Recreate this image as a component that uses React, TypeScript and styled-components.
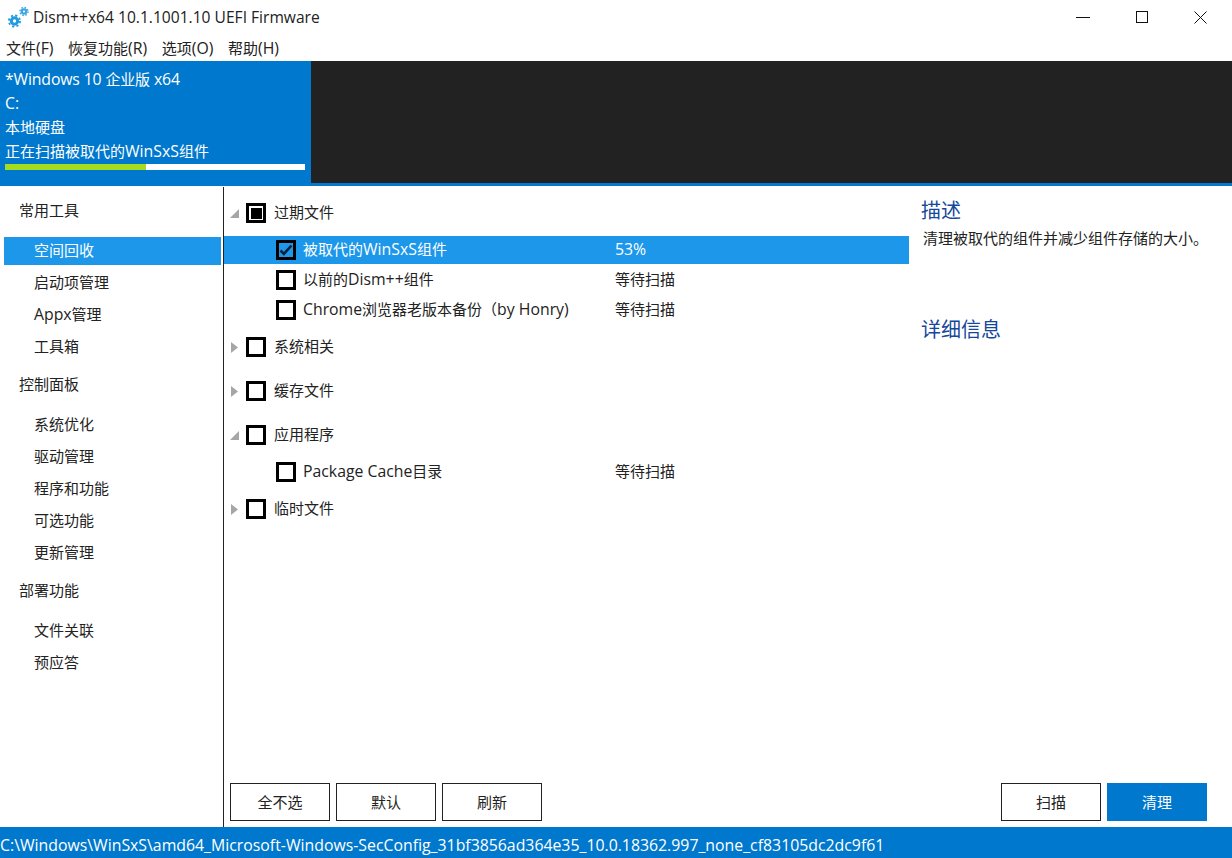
import React from 'react'
import styled, { createGlobalStyle } from 'styled-components'

const GlobalStyle = createGlobalStyle`
    html, body {
        margin: 0;
        padding: 0;
        background: #fff;
    }
    body {
        font-family: "Open Sans", "Noto Sans CJK SC", sans-serif;
        font-size: 15.8px;
        color: #1a1a1a;
    }
`

const navGroups = [
    { title: '常用工具', items: ['空间回收', '启动项管理', 'Appx管理', '工具箱'] },
    { title: '控制面板', items: ['系统优化', '驱动管理', '程序和功能', '可选功能', '更新管理'] },
    { title: '部署功能', items: ['文件关联', '预应答'] },
]

// Latin runs are a bit larger than the Chinese ones in the original UI font
function Text({ children }: { children: string }) {
    const runs = children.split(/([\u3000-\u9fff\uff00-\uffef]+)/)
    return (
        <>
            {runs.map((run, i) => (i % 2 === 1 ? <Han key={i}>{run}</Han> : run))}
        </>
    )
}

function GearIcon() {
    return (
        <svg width="21" height="22" viewBox="0 0 21 22">
            <circle cx="6.5" cy="15" r="3.2" fill="none" stroke="#1f9be0" strokeWidth="3" />
            <circle cx="6.5" cy="15" r="5.6" fill="none" stroke="#1f9be0" strokeWidth="1.8" strokeDasharray="2.2 2.2" />
            <circle cx="16" cy="5.5" r="2.2" fill="none" stroke="#3aa6e2" strokeWidth="2.2" />
            <circle cx="16" cy="5.5" r="4" fill="none" stroke="#3aa6e2" strokeWidth="1.4" strokeDasharray="1.6 1.54" />
        </svg>
    )
}

function Arrow({ open }: { open: boolean }) {
    return (
        <ArrowBox>
            <svg width="10" height="11" viewBox="0 0 10 11">
                {open ? <path d="M9 1v9H0z" fill="#a6a6a6" /> : <path d="M1 0l7 5.5L1 11z" fill="#a6a6a6" />}
            </svg>
        </ArrowBox>
    )
}

function TreeGroup({ label, open, mark }: { label: string; open: boolean; mark?: boolean }) {
    return (
        <GroupRow>
            <Arrow open={open} />
            <CheckBox>{mark && <CheckFill />}</CheckBox>
            <GroupLabel><Text>{label}</Text></GroupLabel>
        </GroupRow>
    )
}

function TreeItem({ label, status, selected, checked }: { label: string; status: string; selected?: boolean; checked?: boolean }) {
    return (
        <ItemRow $selected={selected}>
            <CheckBox>
                {checked && (
                    <svg width="14" height="14" viewBox="0 0 14 14">
                        <path d="M1.5 7.5l3.4 3.4L12.5 2.5" fill="none" stroke="#0b1f3a" strokeWidth="2.6" />
                    </svg>
                )}
            </CheckBox>
            <ItemLabel><Text>{label}</Text></ItemLabel>
            <ItemStatus><Text>{status}</Text></ItemStatus>
        </ItemRow>
    )
}

export default function App(): React.JSX.Element {
    return (
        <Window>
            <GlobalStyle />
            <TitleBar>
                <GearIcon />
                <TitleText>Dism++x64 10.1.1001.10 UEFI Firmware</TitleText>
                <WindowButtons>
                    <WindowButton>
                        <svg width="14" height="14" viewBox="0 0 14 14"><path d="M0 7.5h14" stroke="#111" /></svg>
                    </WindowButton>
                    <WindowButton>
                        <svg width="12" height="12" viewBox="0 0 12 12"><rect x=".5" y=".5" width="11" height="11" fill="none" stroke="#111" /></svg>
                    </WindowButton>
                    <WindowButton>
                        <svg width="13" height="13" viewBox="0 0 13 13"><path d="M.5.5l12 12M12.5.5l-12 12" stroke="#111" /></svg>
                    </WindowButton>
                </WindowButtons>
            </TitleBar>
            <MenuBar>
                <MenuItem><Text>文件(F)</Text></MenuItem>
                <MenuItem><Text>恢复功能(R)</Text></MenuItem>
                <MenuItem><Text>选项(O)</Text></MenuItem>
                <MenuItem><Text>帮助(H)</Text></MenuItem>
            </MenuBar>
            <Banner>
                <SessionCard>
                    <SessionName><Text>*Windows 10 企业版 x64</Text></SessionName>
                    <SessionLine>C:</SessionLine>
                    <SessionLine><Text>本地硬盘</Text></SessionLine>
                    <SessionLine><Text>正在扫描被取代的WinSxS组件</Text></SessionLine>
                    <Progress>
                        <ProgressFill style={{ width: '47%' }} />
                    </Progress>
                </SessionCard>
            </Banner>
            <Body>
                <Sidebar>
                    {navGroups.map((group) => (
                        <NavGroup key={group.title}>
                            <NavTitle><Text>{group.title}</Text></NavTitle>
                            {group.items.map((item) => (
                                <NavItem key={item} $active={item === '空间回收'}><Text>{item}</Text></NavItem>
                            ))}
                        </NavGroup>
                    ))}
                </Sidebar>
                <Main>
                    <Panes>
                        <Tree>
                            <TreeGroup label="过期文件" open mark />
                            <TreeItem label="被取代的WinSxS组件" status="53%" selected checked />
                            <TreeItem label="以前的Dism++组件" status="等待扫描" />
                            <TreeItem label="Chrome浏览器老版本备份（by Honry)" status="等待扫描" />
                            <TreeGroup label="系统相关" open={false} />
                            <TreeGroup label="缓存文件" open={false} />
                            <TreeGroup label="应用程序" open />
                            <TreeItem label="Package Cache目录" status="等待扫描" />
                            <TreeGroup label="临时文件" open={false} />
                        </Tree>
                        <Details>
                            <DetailHeading>描述</DetailHeading>
                            <DetailText><Text>清理被取代的组件并减少组件存储的大小。</Text></DetailText>
                            <DetailHeadingLower>详细信息</DetailHeadingLower>
                        </Details>
                    </Panes>
                    <Actions>
                        <ActionButton><Text>全不选</Text></ActionButton>
                        <ActionButton><Text>默认</Text></ActionButton>
                        <ActionButton><Text>刷新</Text></ActionButton>
                        <ActionSpacer />
                        <ActionButton><Text>扫描</Text></ActionButton>
                        <ActionButton $primary><Text>清理</Text></ActionButton>
                    </Actions>
                </Main>
            </Body>
            <StatusBar>C:\Windows\WinSxS\amd64_Microsoft-Windows-SecConfig_31bf3856ad364e35_10.0.18362.997_none_cf83105dc2dc9f61</StatusBar>
        </Window>
    )
}

const Han = styled.span`
    font-size: 15px;
`
const Window = styled.div`
    width: 1232px;
    height: 858px;
    display: flex;
    flex-direction: column;
    overflow: hidden;
    background: #fff;
`
const TitleBar = styled.div`
    height: 34px;
    display: flex;
    align-items: center;
    padding-left: 8px;
`
const TitleText = styled.div`
    margin-left: 4px;
    font-size: 15.6px;
    color: #222;
`
const WindowButtons = styled.div`
    margin-left: auto;
    display: flex;
    padding-right: 2px;
`
const WindowButton = styled.div`
    width: 59px;
    height: 34px;
    display: flex;
    align-items: center;
    justify-content: center;
`
const MenuBar = styled.div`
    height: 27px;
    display: flex;
    align-items: center;
    gap: 14.6px;
    padding-left: 6px;
`
const MenuItem = styled.div`
    color: #222;
`
const Banner = styled.div`
    height: 122px;
    background: #222222;
    border-bottom: 3px solid #0078cd;
    display: flex;
`
const SessionCard = styled.div`
    width: 311px;
    height: 125px;
    flex-shrink: 0;
    background: #0078cd;
    padding: 7px 6px 0 5px;
    box-sizing: border-box;
    color: #fff;
`
const SessionLine = styled.div`
    height: 24px;
    line-height: 22px;
    white-space: nowrap;
`
const SessionName = styled(SessionLine)`
    letter-spacing: -0.15px;
`
const Progress = styled.div`
    height: 6px;
    background: #fff;
`
const ProgressFill = styled.div`
    height: 100%;
    background: #a5dc1f;
`
const Body = styled.div`
    flex: 1;
    display: flex;
    min-height: 0;
    margin-top: 1px;
`
const Sidebar = styled.div`
    width: 217px;
    border-right: 1px solid #222;
    padding: 8px 2px 0 4px;
`
const NavGroup = styled.div`
    margin-bottom: 8px;
`
const NavTitle = styled.div`
    height: 32px;
    line-height: 30px;
    margin-bottom: 10px;
    padding-left: 15px;
    color: #222;
`
const NavItem = styled.div<{ $active?: boolean }>`
    height: 28px;
    line-height: 26px;
    margin-bottom: 4px;
    padding-left: 30px;
    color: ${(props) => (props.$active ? '#fff' : '#222')};
    background: ${(props) => (props.$active ? '#1c97ea' : 'transparent')};
`
const Main = styled.div`
    flex: 1;
    display: flex;
    flex-direction: column;
    min-width: 0;
`
const Panes = styled.div`
    flex: 1;
    display: flex;
    min-height: 0;
`
const Tree = styled.div`
    width: 685px;
    padding-top: 5px;
    display: flex;
    flex-direction: column;
`
const GroupRow = styled.div`
    height: 30px;
    display: flex;
    align-items: center;
    margin: 6px 0 8px;
    padding-left: 6px;
`
const ArrowBox = styled.div`
    width: 16px;
    display: flex;
    align-items: center;
`
const CheckBox = styled.div`
    width: 20px;
    height: 20px;
    border: 3px solid #000;
    box-sizing: border-box;
    display: flex;
    align-items: center;
    justify-content: center;
    flex-shrink: 0;
`
const CheckFill = styled.div`
    width: 11px;
    height: 11px;
    background: #000;
`
const GroupLabel = styled.div`
    margin-left: 8px;
    padding-bottom: 2px;
    color: #222;
`
const ItemRow = styled.div<{ $selected?: boolean }>`
    height: 28px;
    display: flex;
    align-items: center;
    padding-left: 52px;
    margin-bottom: 2px;
    background: ${(props) => (props.$selected ? '#1c97ea' : 'transparent')};
    color: ${(props) => (props.$selected ? '#fff' : '#222')};
`
const ItemLabel = styled.div`
    margin-left: 7px;
    padding-bottom: 2px;
    width: 312px;
    white-space: nowrap;
`
const ItemStatus = styled.div`
    padding-bottom: 2px;
    white-space: nowrap;
`
const Actions = styled.div`
    display: flex;
    gap: 6px;
    padding: 0 25px 0 6px;
    height: 44px;
`
const ActionSpacer = styled.div`
    flex: 1;
`
const ActionButton = styled.div<{ $primary?: boolean }>`
    width: 100px;
    height: 38px;
    box-sizing: border-box;
    padding-bottom: 2px;
    border: 1px solid ${(props) => (props.$primary ? '#0078cd' : '#222')};
    background: ${(props) => (props.$primary ? '#0078cd' : '#fff')};
    color: ${(props) => (props.$primary ? '#fff' : '#222')};
    display: flex;
    align-items: center;
    justify-content: center;
`
const Details = styled.div`
    flex: 1;
    padding: 11px 12px 0;
`
const DetailHeading = styled.div`
    font-size: 20px;
    line-height: 26px;
    color: #15479a;
`
const DetailText = styled.div`
    margin-top: 4px;
    margin-left: 2px;
    line-height: 20px;
    color: #222;
    white-space: nowrap;
`
const DetailHeadingLower = styled(DetailHeading)`
    margin-top: 69px;
`
const StatusBar = styled.div`
    height: 31px;
    line-height: 36px;
    font-size: 15.84px;
    background: #0078cd;
    color: #fff;
    white-space: nowrap;
    overflow: hidden;
`
